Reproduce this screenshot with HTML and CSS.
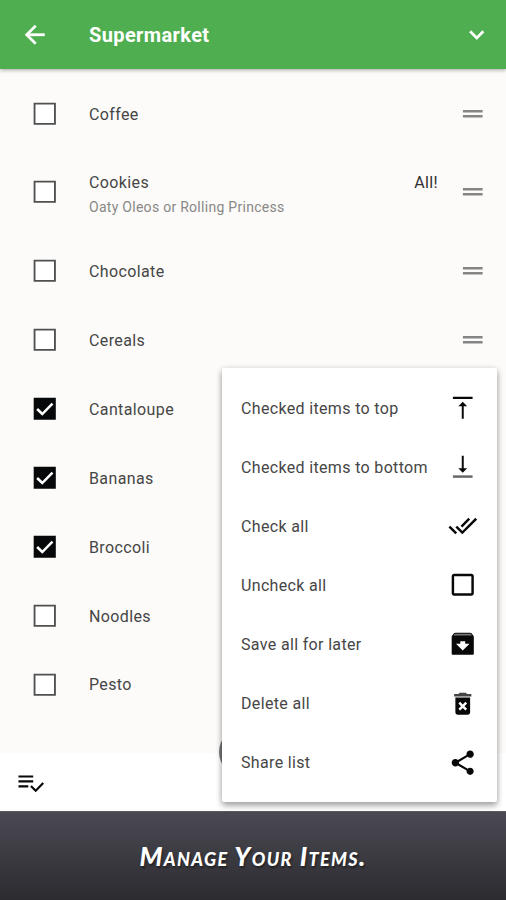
FILE: index.html
```html
<!DOCTYPE html>
<html lang="en">
<head>
<meta charset="utf-8">
<title>Supermarket</title>
<link rel="stylesheet" href="styles.css">
</head>
<body>
<svg class="defs" aria-hidden="true">
  <symbol id="box" viewBox="0 0 24 24"><path d="M3.7 3.7h16.6v16.6H3.7z" fill="#fff" stroke="#505050" stroke-width="1.5"/></symbol>
  <symbol id="checked" viewBox="0 0 24 24"><path d="M3 3h18v18H3z" fill="#070809"/><path d="M5.8 12.2l4.2 4.1 8.3-8.4" fill="none" stroke="#fff" stroke-width="2.1"/></symbol>
  <symbol id="drag" viewBox="0 0 24 24"><path d="M20 9H4v1.9h16V9zM4 15h16v-1.9H4V15z"/></symbol>
</svg>
<div class="app">
  <header class="bar">
    <svg class="icon" viewBox="0 0 24 24"><path d="M20 11H7.83l5.59-5.59L12 4l-8 8 8 8 1.41-1.41L7.83 13H20v-2z" stroke="#fff" stroke-width=".3"/></svg>
    <h1 class="title">Supermarket</h1>
    <svg class="icon" viewBox="0 0 24 24"><path d="M16.59 8.59L12 13.17 7.41 8.59 6 10l6 6 6-6z" stroke="#fff" stroke-width=".3"/></svg>
  </header>
  <main class="list">
    <div class="row"><svg class="icon"><use href="#box"/></svg><span class="name">Coffee</span><svg class="icon drag"><use href="#drag"/></svg></div>
    <div class="row tall"><svg class="icon"><use href="#box"/></svg><div class="name"><div class="first"><span>Cookies</span><span class="qty">All!</span></div><div class="note">Oaty Oleos or Rolling Princess</div></div><svg class="icon drag"><use href="#drag"/></svg></div>
    <div class="row"><svg class="icon"><use href="#box"/></svg><span class="name">Chocolate</span><svg class="icon drag"><use href="#drag"/></svg></div>
    <div class="row"><svg class="icon"><use href="#box"/></svg><span class="name">Cereals</span><svg class="icon drag"><use href="#drag"/></svg></div>
    <div class="row"><svg class="icon"><use href="#checked"/></svg><span class="name">Cantaloupe</span></div>
    <div class="row"><svg class="icon"><use href="#checked"/></svg><span class="name">Bananas</span></div>
    <div class="row"><svg class="icon"><use href="#checked"/></svg><span class="name">Broccoli</span></div>
    <div class="row"><svg class="icon"><use href="#box"/></svg><span class="name">Noodles</span></div>
    <div class="row"><svg class="icon"><use href="#box"/></svg><span class="name">Pesto</span></div>
  </main>
  <div class="bottom">
    <svg class="icon" viewBox="0 0 24 24"><path d="M14 10H2v1.8h12V10zm0-4H2v1.8h12V6zM2 15.8h8V14H2v1.8zm19.5-4.3L22.8 12.8l-6.79 7-4.51-4.5L12.8 14l3.21 3.2 5.49-5.7z"/></svg>
    <div class="fab"></div>
  </div>
  <footer class="caption"><span>Manage Your Items.</span></footer>
  <nav class="menu">
    <div class="item"><span>Checked items to top</span><svg class="icon" viewBox="0 0 24 24"><path d="M8.4 10.8h2.8V21h1.6V10.8h2.8L12 7.2zM4 3v1.8h16V3H4z"/></svg></div>
    <div class="item"><span>Checked items to bottom</span><svg class="icon" viewBox="0 0 24 24"><path d="M15.6 13.2h-2.8V3h-1.6v10.2H8.4l3.6 3.6z"/><path d="M4 19v2h16v-2z" fill="#666"/></svg></div>
    <div class="item"><span>Check all</span><svg class="icon" viewBox="0 0 24 24"><path d="M18 7l-1.41-1.41-6.34 6.34 1.41 1.41L18 7zm4.24-1.41L11.66 16.17 7.48 12l-1.41 1.41L11.66 19l12-12-1.42-1.41zM.41 13.41L6 19l1.41-1.41L1.83 12 .41 13.41z"/></svg></div>
    <div class="item"><span>Uncheck all</span><svg class="icon" viewBox="0 0 24 24"><path d="M19 5v14H5V5h14m0-2H5c-1.1 0-2 .9-2 2v14c0 1.1.9 2 2 2h14c1.1 0 2-.9 2-2V5c0-1.1-.9-2-2-2z"/></svg></div>
    <div class="item"><span>Save all for later</span><svg class="icon" viewBox="0 0 24 24"><path d="M20.54 5.23l-1.39-1.68C18.88 3.21 18.47 3 18 3H6c-.47 0-.88.21-1.16.55L3.46 5.23C3.17 5.57 3 6.02 3 6.5V20c0 .6.4 1 1 1h16c.6 0 1-.4 1-1V6.5c0-.48-.17-.93-.46-1.27zM12 17.5L6.5 12H10v-2h4v2h3.5L12 17.5z"/><path d="M5.5 3.8h13l1 1.5h-15z" fill="#777"/></svg></div>
    <div class="item"><span>Delete all</span><svg class="icon" viewBox="0 0 24 24"><path d="M6 19c0 1.1.9 2 2 2h8c1.1 0 2-.9 2-2V7H6v12zm2.46-7.12l1.41-1.41L12 12.59l2.12-2.12 1.41 1.41L13.41 14l2.12 2.12-1.41 1.41L12 15.41l-2.12 2.12-1.41-1.41L10.59 14l-2.13-2.12z"/><path d="M15.5 4l-1-1h-5l-1 1H5v2h14V4z" fill="#444"/></svg></div>
    <div class="item"><span>Share list</span><svg class="icon" viewBox="0 0 24 24"><path d="M18 16.08c-.76 0-1.44.3-1.96.77L8.91 12.7c.05-.23.09-.46.09-.7s-.04-.47-.09-.7l7.05-4.11c.54.5 1.25.81 2.04.81 1.66 0 3-1.34 3-3s-1.34-3-3-3-3 1.34-3 3c0 .24.04.47.09.7L8.04 9.81C7.5 9.31 6.79 9 6 9c-1.66 0-3 1.34-3 3s1.34 3 3 3c.79 0 1.5-.31 2.04-.81l7.12 4.16c-.05.21-.08.43-.08.65 0 1.61 1.31 2.92 2.92 2.92s2.92-1.31 2.92-2.92-1.31-2.92-2.92-2.92z"/></svg></div>
  </nav>
</div>
</body>
</html>
```

FILE: styles.css
```css
* { box-sizing: border-box; }
body { margin: 0; font-family: Roboto, sans-serif; color: #464646; }
.defs { position: absolute; width: 0; height: 0; }
.app {
  position: relative;
  display: flex;
  flex-direction: column;
  width: 506px;
  height: 900px;
  overflow: hidden;
  background: #fcfbf9;
}
.icon { display: block; flex: none; width: 29.5px; height: 29.5px; fill: #080808; }
.bar {
  display: flex;
  align-items: center;
  flex: none;
  height: 69px;
  padding: 0 14.5px 0 20px;
  background: #4faf50;
  box-shadow: 0 1px 4px rgba(0, 0, 0, .35);
}
.bar .icon { fill: #fff; }
.title { flex: 1; margin: 0 0 0 39.5px; font-size: 20px; font-weight: 700; letter-spacing: .38px; color: #fff; }
.list { flex: 1; padding-top: 10px; font-size: 16px; letter-spacing: .38px; }
.row { display: flex; align-items: center; height: 68.9px; padding: 0 19px 0 30px; }
.tall { height: 88.6px; }
.name { flex: 1; margin-left: 29.5px; padding-top: 1.4px; }
.first { display: flex; justify-content: space-between; padding: 5px 19.5px 0 0; line-height: 20px; }
.qty { color: #303030; }
.note { margin-top: 4px; font-size: 14px; line-height: 20px; letter-spacing: .28px; color: #888; }
.drag { fill: #858585; }
.bottom {
  position: relative;
  display: flex;
  align-items: center;
  flex: none;
  height: 58px;
  padding: 1px 0 0 15.5px;
  background: #fff;
}
.fab { position: absolute; left: 218.5px; top: -26px; width: 50px; height: 50px; border-radius: 50%; background: #777; }
.caption {
  display: flex;
  align-items: center;
  justify-content: center;
  flex: none;
  height: 89px;
  border-top: 1px solid #5c5c5e;
  background: linear-gradient(#4b4a53, #2b2b30);
  color: #fff;
  font: italic 900 26px Lato, sans-serif;
  font-variant: small-caps;
  letter-spacing: 1.35px;
  text-shadow: 1px 2px 2px #202024;
}
.menu {
  position: absolute;
  left: 222px;
  top: 368px;
  width: 274.5px;
  height: 433.5px;
  padding: 10.3px 19.5px 10px 19px;
  border-radius: 2px;
  background: #fff;
  box-shadow: 0 4px 6px rgba(0, 0, 0, .28), 0 1px 6px rgba(0, 0, 0, .18);
  font-size: 16px;
  letter-spacing: .34px;
}
.item { display: flex; align-items: center; justify-content: space-between; height: 59.1px; }
.item span { padding-top: 1px; }
```
